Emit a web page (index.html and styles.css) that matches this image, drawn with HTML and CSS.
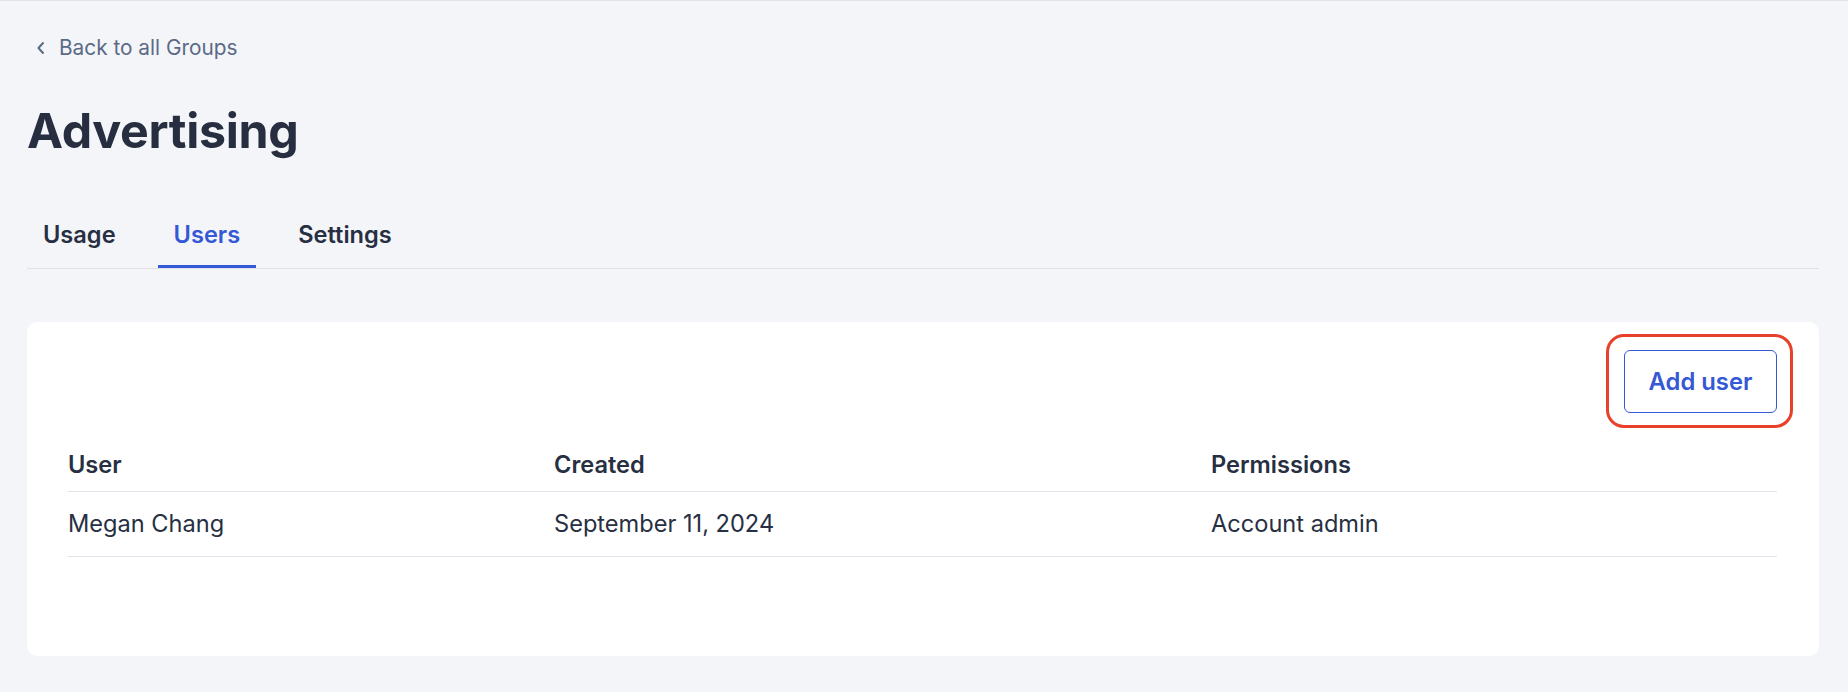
FILE: index.html
```html
<!DOCTYPE html>
<html lang="en">
<head>
<meta charset="utf-8">
<title>Advertising – Users</title>
<link rel="stylesheet" href="styles.css">
</head>
<body>
<div class="page">
  <a class="back-link" href="#">
    <svg class="chevron" width="10" height="14" viewBox="0 0 10 14" aria-hidden="true"><path d="M7 2 L2.5 7 L7 12" fill="none" stroke="currentColor" stroke-width="2" stroke-linecap="round" stroke-linejoin="round"/></svg>
    <span>Back to all Groups</span>
  </a>
  <h1 class="title">Advertising</h1>
  <nav class="tabs">
    <a class="tab" href="#">Usage</a>
    <a class="tab tab-active" href="#">Users</a>
    <a class="tab" href="#">Settings</a>
  </nav>
  <section class="card">
    <div class="card-actions">
      <span class="highlight">
        <button class="btn-outline" type="button">Add user</button>
      </span>
    </div>
    <div class="table">
      <div class="row head">
        <div class="cell">User</div>
        <div class="cell">Created</div>
        <div class="cell">Permissions</div>
      </div>
      <div class="row">
        <div class="cell">Megan Chang</div>
        <div class="cell">September 11, 2024</div>
        <div class="cell">Account admin</div>
      </div>
    </div>
  </section>
</div>
</body>
</html>
```
FILE: styles.css
```css
html, body {
  margin: 0;
  padding: 0;
}
body {
  background: #f4f5f9;
  font-family: "Inter", "Lato", "Liberation Sans", sans-serif;
  color: #272f42;
  border-top: 1px solid #e0e2e8;
  min-height: 691px;
}
.page {
  padding: 31px 29px 0 27px;
}
.back-link {
  display: inline-flex;
  align-items: center;
  gap: 13px;
  margin-left: 9px;
  font-size: 20.8px;
  line-height: 32px;
  color: #5a6a86;
  text-decoration: none;
}
.chevron {
  display: block;
}
.title {
  margin: 38px 0 0 0;
  font-size: 48.3px;
  line-height: 58px;
  font-weight: 700;
  letter-spacing: -0.3px;
  color: #262e40;
}
.tabs {
  display: flex;
  gap: 26px;
  margin-top: 42px;
  border-bottom: 1px solid #dfe1e8;
}
.tab {
  display: block;
  padding: 15px 16px 12px;
  font-size: 23.6px;
  line-height: 36px;
  font-weight: 600;
  color: #272f42;
  text-decoration: none;
  border-bottom: 3px solid transparent;
}
.tab-active {
  color: #3558d6;
  border-bottom-color: #3558d6;
}
.card {
  margin-top: 53px;
  background: #ffffff;
  border-radius: 10px;
  padding: 28px 42px 99px 41px;
}
.card-actions {
  display: flex;
  justify-content: flex-end;
}
.highlight {
  position: relative;
  display: inline-block;
}
.highlight::after {
  content: "";
  position: absolute;
  top: -16px;
  bottom: -15px;
  left: -18px;
  right: -16px;
  border: 3px solid #e8402a;
  border-radius: 18px;
  pointer-events: none;
}
.btn-outline {
  display: block;
  height: 63px;
  width: 153px;
  padding: 0;
  background: #ffffff;
  border: 1px solid #3558d6;
  border-radius: 6px;
  font-family: inherit;
  font-size: 23.8px;
  font-weight: 600;
  color: #3558d6;
}
.table {
  margin-top: 34px;
}
.row {
  display: grid;
  grid-template-columns: 486px 657px 1fr;
  border-bottom: 1px solid #e3e4eb;
  padding: 14px 0;
}
.row.head {
  padding: 0 0 8px;
  font-weight: 600;
}
.cell {
  font-size: 23.6px;
  line-height: 36px;
}
```
